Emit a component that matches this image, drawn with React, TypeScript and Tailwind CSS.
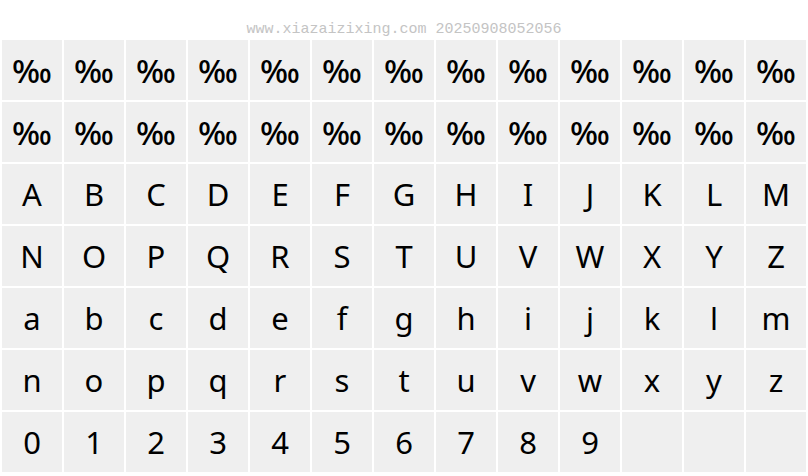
import * as React from "react";

const rows: string[][] = [
    Array(13).fill("‰"),
    Array(13).fill("‰"),
    "ABCDEFGHIJKLM".split(""),
    "NOPQRSTUVWXYZ".split(""),
    "abcdefghijklm".split(""),
    "nopqrstuvwxyz".split(""),
    [..."0123456789".split(""), "", "", ""],
];

export default function App() {
    return (
        <div className="w-[808px] h-[476px] bg-white overflow-hidden">
            <div className="h-[40px] flex items-end justify-center pb-[3px]">
                <span className="font-['Liberation_Mono',monospace] text-[15px] leading-[15px] text-[#c4c4c4]">
                    www.xiazaizixing.com 20250908052056
                </span>
            </div>
            <div className="grid grid-cols-[repeat(13,60px)] auto-rows-[60px] gap-[2px] px-[2px]">
                {rows.flat().map((ch, i) => (
                    <div
                        key={i}
                        className={
                            ch === "‰"
                                ? "bg-[#efefef] flex items-center justify-center font-['Noto_Sans',sans-serif] text-[33px] font-medium leading-none text-black"
                                : "bg-[#efefef] flex items-center justify-center font-['Noto_Sans',sans-serif] text-[31px] leading-none text-black"
                        }
                    >
                        {ch}
                    </div>
                ))}
            </div>
        </div>
    );
}
